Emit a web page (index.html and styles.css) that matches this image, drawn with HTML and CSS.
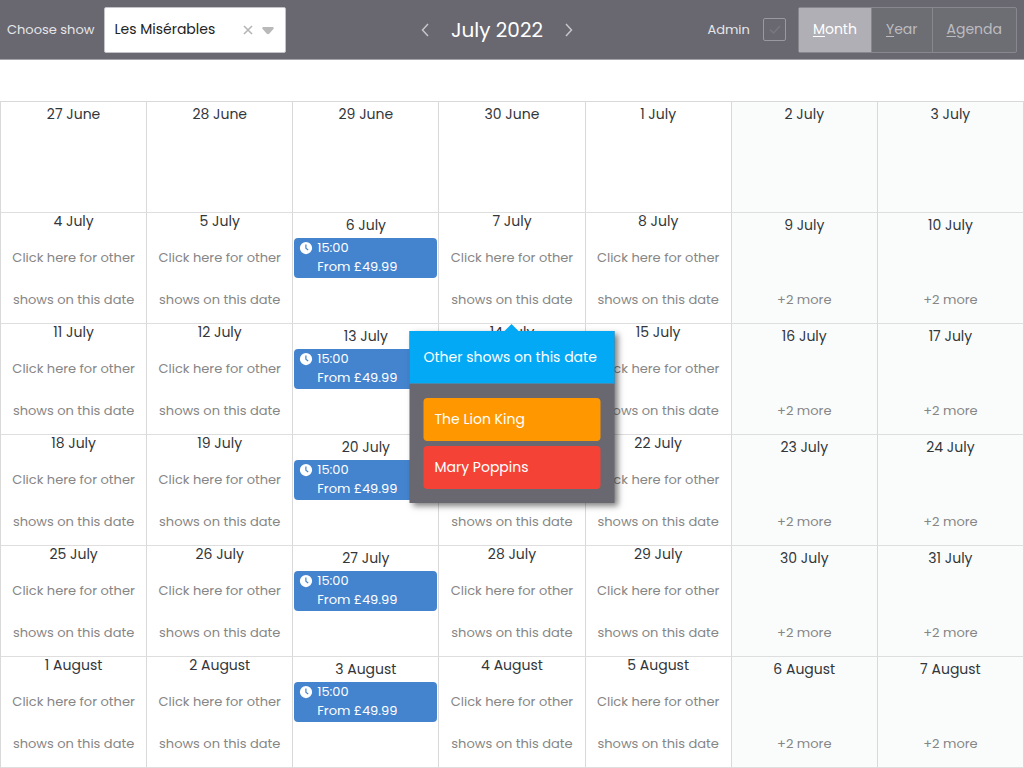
FILE: index.html
```html
<!DOCTYPE html>
<html lang="en">
<head>
<meta charset="utf-8">
<meta name="viewport" content="width=device-width, initial-scale=1">
<title>Show calendar</title>
<link rel="stylesheet" href="styles.css">
</head>
<body>
<svg class="sprite" aria-hidden="true">
  <symbol id="clock" viewBox="0 0 16 16"><path fill="currentColor" fill-rule="evenodd" d="M8 1a7 7 0 1 0 0 14A7 7 0 0 0 8 1ZM7.2 4h1.4v4l2.3 1.7-.8 1.1-2.9-2.2Z"/></symbol>
</svg>
<header class="toolbar">
  <div class="picker">
    <label for="show">Choose show</label>
    <div class="select-box">
      <select id="show"><option>Les Misérables</option><option>The Lion King</option><option>Mary Poppins</option></select>
      <button class="clear" type="button" aria-label="Clear show"><svg viewBox="0 0 10 10" width="10" height="10"><path d="M1 1l8 8M9 1L1 9" stroke="currentColor" stroke-width="1.6" fill="none"/></svg></button>
      <svg class="caret" viewBox="0 0 12 8" width="12" height="8"><path d="M1.200 0h9.600q1.600.6.600 2L7.400 6.600q-1.400 1.400-2.800 0L.6 2Q-.4.6 1.200 0Z" fill="currentColor"/></svg>
    </div>
  </div>
  <div class="month-nav">
    <button type="button" aria-label="Previous month"><svg viewBox="0 0 8 14" width="8" height="14"><path d="M7 1L1.500 7 7 13" stroke="currentColor" stroke-width="1.500" fill="none"/></svg></button>
    <h1>July 2022</h1>
    <button type="button" aria-label="Next month"><svg viewBox="0 0 8 14" width="8" height="14"><path d="M1 1l5.500 6L1 13" stroke="currentColor" stroke-width="1.500" fill="none"/></svg></button>
  </div>
  <div class="options">
    <label class="admin" for="admin">Admin</label>
    <span class="check"><input id="admin" type="checkbox"><svg viewBox="0 0 12 9" width="12" height="9"><path d="M1 4.500L4.500 8 11 1" stroke="currentColor" stroke-width="1.500" fill="none"/></svg></span>
    <div class="views">
      <button class="active" type="button"><u>M</u>onth</button>
      <button type="button"><u>Y</u>ear</button>
      <button type="button"><u>A</u>genda</button>
    </div>
  </div>
</header>
<main>
<table class="calendar">
  <tbody>
  <tr>
    <td class="plain"><time>27 June</time></td>
    <td class="plain"><time>28 June</time></td>
    <td class="plain"><time>29 June</time></td>
    <td class="plain"><time>30 June</time></td>
    <td class="plain"><time>1 July</time></td>
    <td class="plain weekend"><time>2 July</time></td>
    <td class="plain weekend"><time>3 July</time></td>
  </tr>
  <tr>
    <td class="other"><time>4 July</time><button type="button">Click here for other<br>shows on this date</button></td>
    <td class="other"><time>5 July</time><button type="button">Click here for other<br>shows on this date</button></td>
    <td><time>6 July</time><a class="event" href="#"><svg><use href="#clock"/></svg><span>15:00<br>From £49.99</span></a></td>
    <td class="other anchor"><time>7 July</time><button type="button">Click here for other<br>shows on this date</button>
      <div class="popup">
        <h2>Other shows on this date</h2>
        <ul>
          <li><a class="lion" href="#">The Lion King</a></li>
          <li><a class="mary" href="#">Mary Poppins</a></li>
        </ul>
      </div>
    </td>
    <td class="other"><time>8 July</time><button type="button">Click here for other<br>shows on this date</button></td>
    <td class="weekend"><time>9 July</time><a class="more" href="#">+2 more</a></td>
    <td class="weekend"><time>10 July</time><a class="more" href="#">+2 more</a></td>
  </tr>
  <tr>
    <td class="other"><time>11 July</time><button type="button">Click here for other<br>shows on this date</button></td>
    <td class="other"><time>12 July</time><button type="button">Click here for other<br>shows on this date</button></td>
    <td><time>13 July</time><a class="event" href="#"><svg><use href="#clock"/></svg><span>15:00<br>From £49.99</span></a></td>
    <td class="other"><time>14 July</time><button type="button">Click here for other<br>shows on this date</button></td>
    <td class="other"><time>15 July</time><button type="button">Click here for other<br>shows on this date</button></td>
    <td class="weekend"><time>16 July</time><a class="more" href="#">+2 more</a></td>
    <td class="weekend"><time>17 July</time><a class="more" href="#">+2 more</a></td>
  </tr>
  <tr>
    <td class="other"><time>18 July</time><button type="button">Click here for other<br>shows on this date</button></td>
    <td class="other"><time>19 July</time><button type="button">Click here for other<br>shows on this date</button></td>
    <td><time>20 July</time><a class="event" href="#"><svg><use href="#clock"/></svg><span>15:00<br>From £49.99</span></a></td>
    <td class="other"><time>21 July</time><button type="button">Click here for other<br>shows on this date</button></td>
    <td class="other"><time>22 July</time><button type="button">Click here for other<br>shows on this date</button></td>
    <td class="weekend"><time>23 July</time><a class="more" href="#">+2 more</a></td>
    <td class="weekend"><time>24 July</time><a class="more" href="#">+2 more</a></td>
  </tr>
  <tr>
    <td class="other"><time>25 July</time><button type="button">Click here for other<br>shows on this date</button></td>
    <td class="other"><time>26 July</time><button type="button">Click here for other<br>shows on this date</button></td>
    <td><time>27 July</time><a class="event" href="#"><svg><use href="#clock"/></svg><span>15:00<br>From £49.99</span></a></td>
    <td class="other"><time>28 July</time><button type="button">Click here for other<br>shows on this date</button></td>
    <td class="other"><time>29 July</time><button type="button">Click here for other<br>shows on this date</button></td>
    <td class="weekend"><time>30 July</time><a class="more" href="#">+2 more</a></td>
    <td class="weekend"><time>31 July</time><a class="more" href="#">+2 more</a></td>
  </tr>
  <tr>
    <td class="other"><time>1 August</time><button type="button">Click here for other<br>shows on this date</button></td>
    <td class="other"><time>2 August</time><button type="button">Click here for other<br>shows on this date</button></td>
    <td><time>3 August</time><a class="event" href="#"><svg><use href="#clock"/></svg><span>15:00<br>From £49.99</span></a></td>
    <td class="other"><time>4 August</time><button type="button">Click here for other<br>shows on this date</button></td>
    <td class="other"><time>5 August</time><button type="button">Click here for other<br>shows on this date</button></td>
    <td class="weekend"><time>6 August</time><a class="more" href="#">+2 more</a></td>
    <td class="weekend"><time>7 August</time><a class="more" href="#">+2 more</a></td>
  </tr>
  </tbody>
</table>
</main>
</body>
</html>
```

FILE: styles.css
```css
* { box-sizing: border-box; }

body {
  margin: 0;
  background: #fff;
  color: #32363a;
  font-family: Poppins, Inter, "Noto Sans", sans-serif;
  font-size: 14px;
}

button, select { font: inherit; color: inherit; }
button { border: 0; padding: 0; background: none; cursor: pointer; }
a { color: inherit; text-decoration: none; }
svg { display: block; }
.sprite { position: absolute; width: 0; height: 0; }

.toolbar {
  display: flex;
  align-items: center;
  justify-content: space-between;
  height: 60px;
  padding: 0 7px;
  background: #696871;
  border-bottom: 1px solid #a5a4aa;
  color: #e6e6e8;
}

.picker { display: flex; align-items: center; gap: 10px; font-size: 13px; }
.select-box { position: relative; color: #222; font-size: 14px; }
.select-box select {
  appearance: none;
  display: block;
  width: 182px;
  height: 46px;
  padding: 0 44px 2px 9px;
  border: 1px solid #c4c4c8;
  border-radius: 2px;
  background: #fff;
}
.clear { position: absolute; right: 33px; top: 18px; color: #b5b5b5; }
.caret { position: absolute; right: 12px; top: 20px; color: #b9b9b9; }

.month-nav { display: flex; align-items: center; gap: 22px; color: #c6c6ca; }
.month-nav h1 { margin: 0; color: #fff; font-size: 20px; font-weight: 400; line-height: 30px; }

.options { display: flex; align-items: center; justify-content: flex-end; font-size: 14px; }
.admin { margin-right: 13px; font-size: 13px; }
.check { position: relative; margin-right: 12px; color: #77777e; }
.check input {
  appearance: none;
  display: block;
  width: 23px;
  height: 23px;
  margin: 0;
  border: 1px solid #9a99a0;
  border-radius: 2px;
}
.check svg { position: absolute; left: 6px; top: 7px; pointer-events: none; }

.views {
  display: flex;
  height: 46px;
  border: 1px solid #88878e;
  border-radius: 2px;
  background: #6d6d74;
  color: #bcbcc0;
}
.views button { padding: 0 14px; }
.views button + button { border-left: 1px solid #88878e; }
.views .active { background: #b0afb5; color: #fff; }
.views u { text-underline-offset: 2px; }

main { padding-top: 41px; }

.calendar {
  width: 100%;
  height: calc(100vh - 101px);
  table-layout: fixed;
  border-collapse: separate;
  border-spacing: 0;
  border-top: 1px solid #d9d9d9;
  border-left: 1px solid #d9d9d9;
}
.calendar td {
  height: 111px;
  padding: 0;
  vertical-align: top;
  text-align: center;
  border-right: 1px solid #d9d9d9;
  border-bottom: 1px solid #dedede;
}
.calendar .weekend { background: #fafcfc; }
time { display: block; margin-bottom: 1px; line-height: 24px; }
.other time { line-height: 16px; }
.other button {
  display: block;
  width: 100%;
  margin-top: 8px;
  color: #868686;
  font-size: 13px;
  line-height: 42px;
  white-space: nowrap;
}
.more { display: block; margin-top: 53px; color: #868686; font-size: 13px; line-height: 20px; }

.event {
  display: flex;
  gap: 4px;
  margin: 0 1px;
  height: 40px;
  padding: 0 5px;
  border-radius: 4px;
  background: #4484ce;
  color: #fff;
  font-size: 13px;
  line-height: 19px;
  text-align: left;
}
.event svg { flex: none; width: 14px; height: 14px; margin-top: 3px; }

.anchor { position: relative; }
.popup {
  position: absolute;
  z-index: 1;
  top: calc(100% + 8px);
  left: 50%;
  width: 205px;
  transform: translateX(-50%);
  background: #696871;
  box-shadow: 3px 3px 6px rgba(0, 0, 0, .5);
  color: #fff;
}
.popup::before {
  content: "";
  position: absolute;
  left: 50%;
  bottom: 100%;
  margin-left: -7px;
  border: 7px solid transparent;
  border-top: 0;
  border-bottom-color: #03a9f4;
}
.popup h2 {
  margin: 0;
  padding: 0 14px;
  background: #03a9f4;
  border-bottom: 1px solid #4b88ab;
  font-size: 14px;
  font-weight: 400;
  line-height: 52px;
  text-align: left;
  white-space: nowrap;
}
.popup ul {
  display: grid;
  gap: 5px;
  margin: 0;
  padding: 14px;
  list-style: none;
  text-align: left;
}
.popup li a { display: block; padding: 0 11px; border-radius: 4px; line-height: 43px; }
.popup .lion { background: #ff9800; }
.popup .mary { background: #f44336; }
```
